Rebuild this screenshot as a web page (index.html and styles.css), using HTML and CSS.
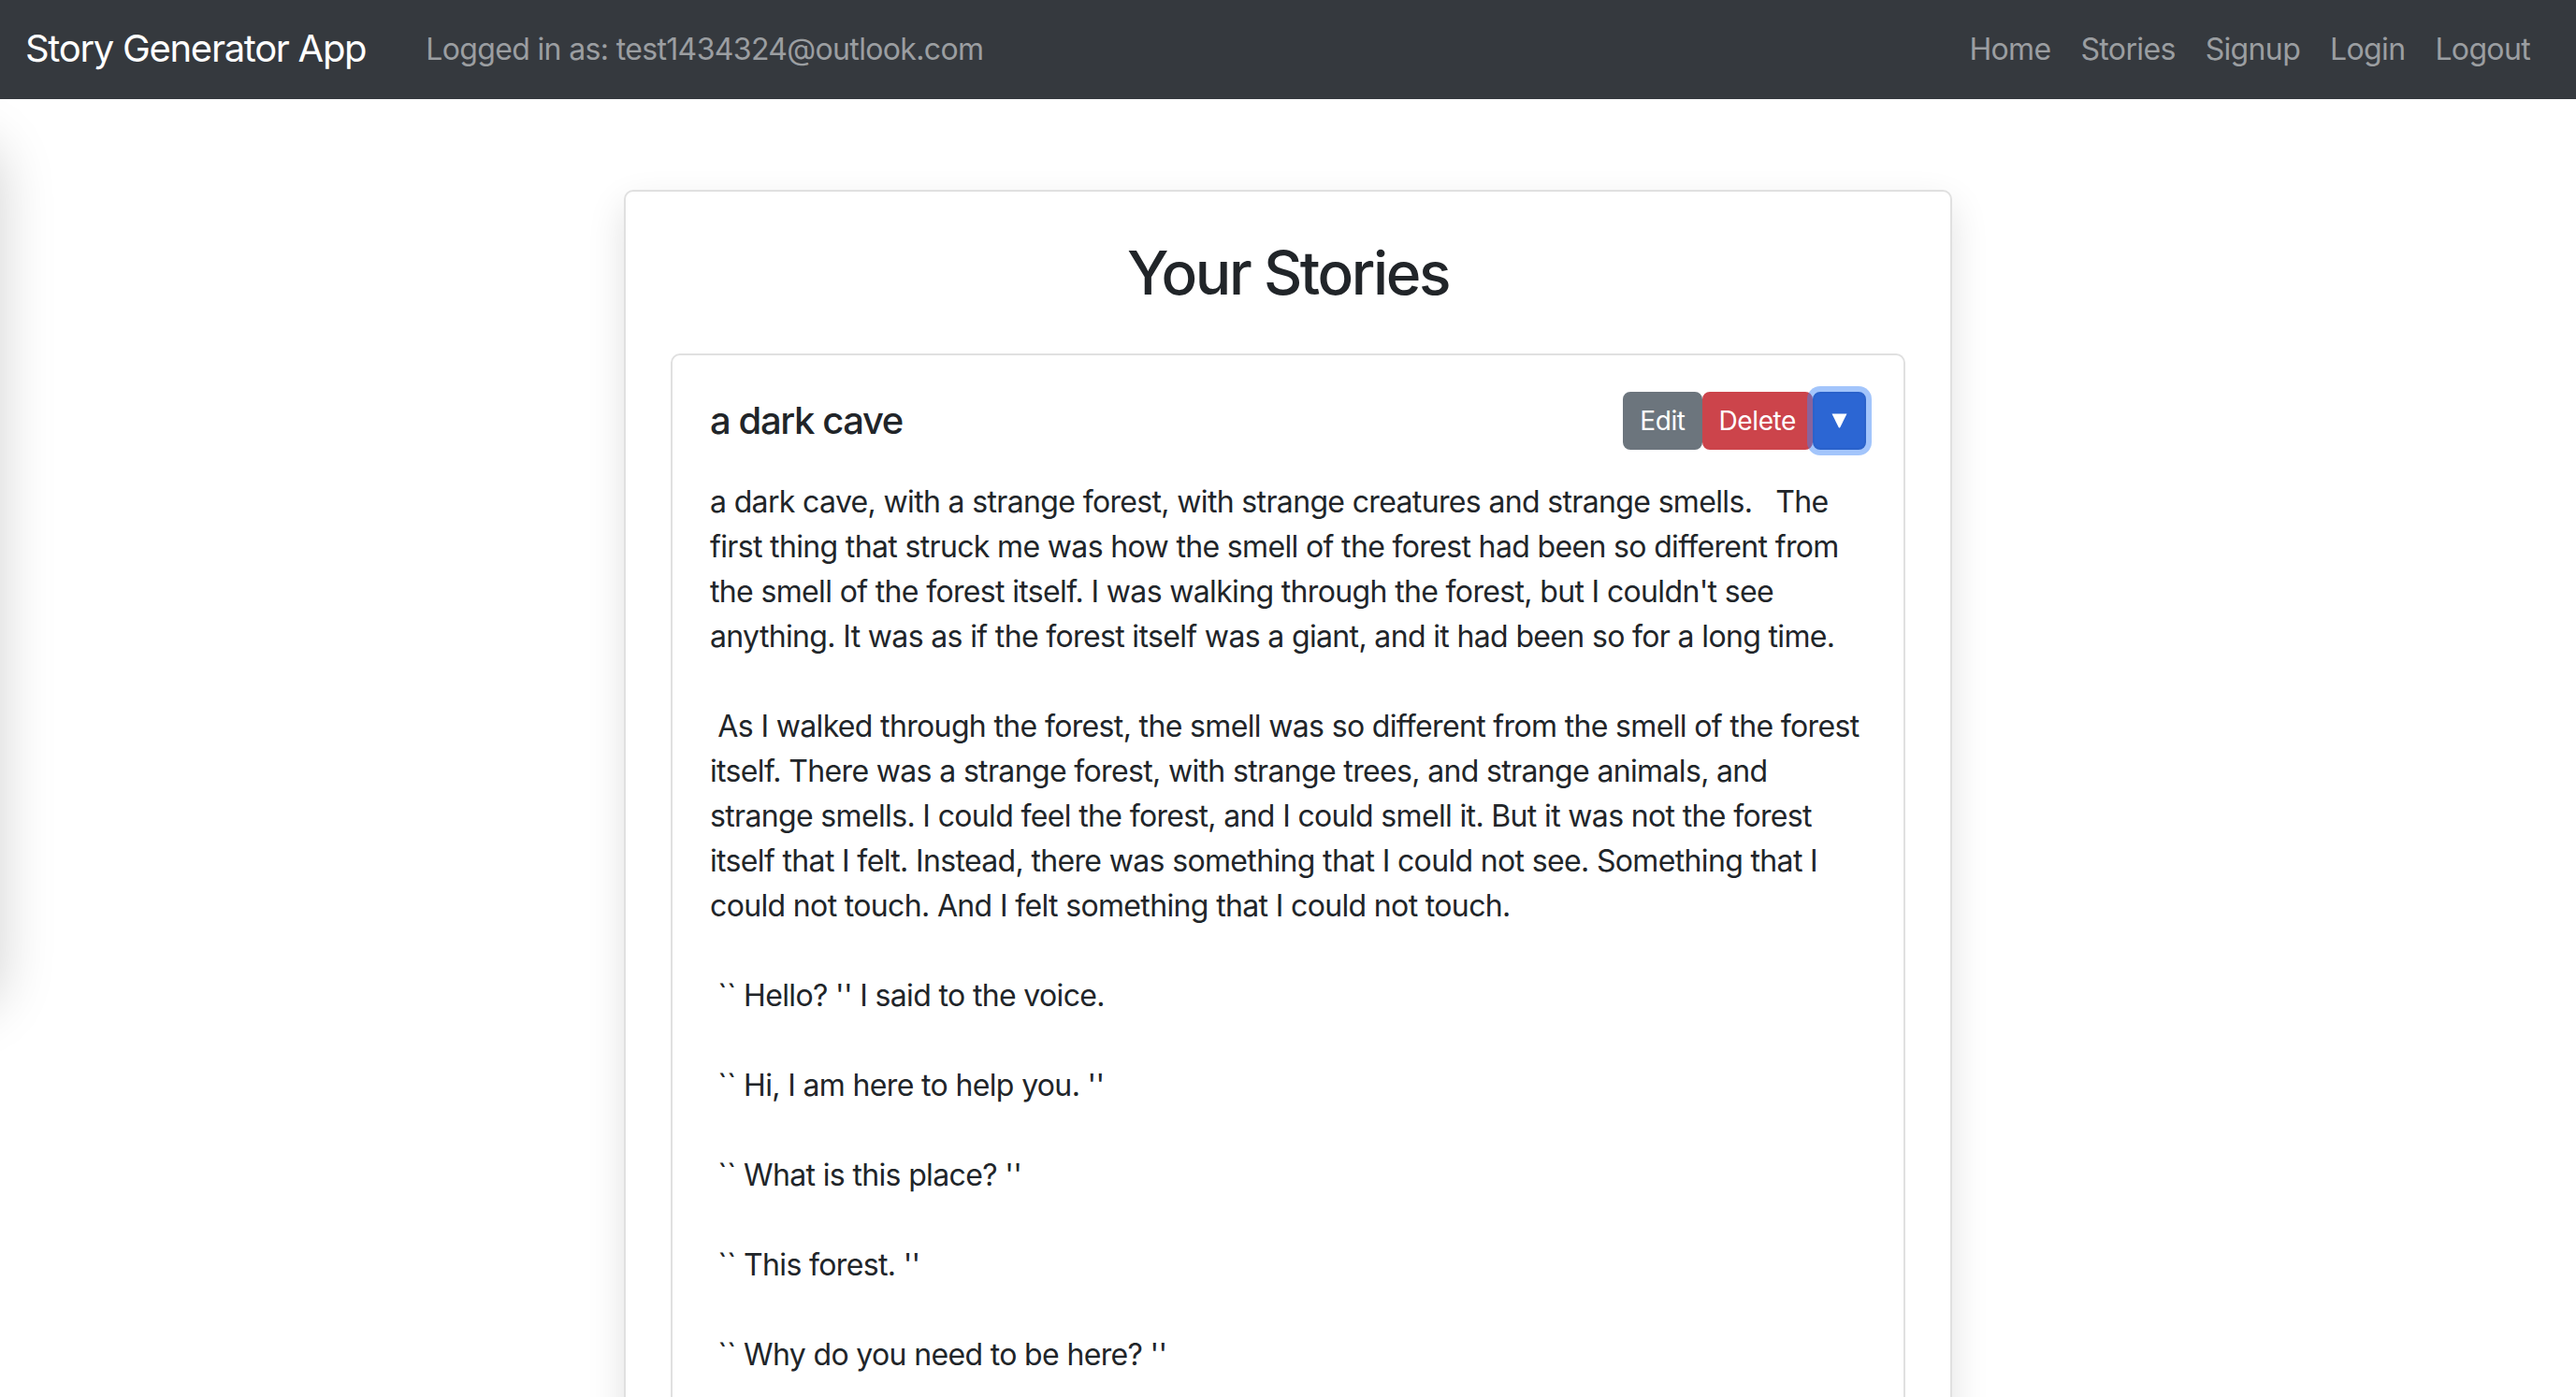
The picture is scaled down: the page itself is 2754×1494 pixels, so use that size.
FILE: index.html
```html
<!DOCTYPE html>
<html lang="en">
<head>
<meta charset="utf-8">
<title>Story Generator App</title>
<link rel="stylesheet" href="styles.css">
</head>
<body>
<nav class="navbar">
  <div class="nav-left">
    <a class="brand" href="#">Story Generator App</a>
    <span class="nav-text">Logged in as: test1434324@outlook.com</span>
  </div>
  <ul class="nav-links">
    <li><a href="#">Home</a></li>
    <li><a href="#">Stories</a></li>
    <li><a href="#">Signup</a></li>
    <li><a href="#">Login</a></li>
    <li><a href="#">Logout</a></li>
  </ul>
</nav>
<div class="edge-shadow"></div>
<main class="page">
  <section class="outer-card">
    <h2 class="page-title">Your Stories</h2>
    <article class="story-card">
      <div class="story-head">
        <h5 class="story-title">a dark cave</h5>
        <div class="btn-group">
          <button class="btn btn-edit">Edit</button>
          <button class="btn btn-delete">Delete</button>
          <button class="btn btn-toggle"><svg width="17" height="16" viewBox="0 0 17 16"><path d="M0.5 0.5 H16.5 L9.3 15 Q8.5 16 7.7 15 Z" fill="#fff"/></svg></button>
        </div>
      </div>
      <p class="story-text">a dark cave, with a strange forest, with strange creatures and strange smells.   The first thing that struck me was how the smell of the forest had been so different from the smell of the forest itself. I was walking through the forest, but I couldn't see anything. It was as if the forest itself was a giant, and it had been so for a long time.

 As I walked through the forest, the smell was so different from the smell of the forest itself. There was a strange forest, with strange trees, and strange animals, and strange smells. I could feel the forest, and I could smell it. But it was not the forest itself that I felt. Instead, there was something that I could not see. Something that I could not touch. And I felt something that I could not touch.

 `` Hello? '' I said to the voice.

 `` Hi, I am here to help you. ''

 `` What is this place? ''

 `` This forest. ''

 `` Why do you need to be here? ''</p>
    </article>
  </section>
</main>
</body>
</html>
```

FILE: styles.css
```css
* { box-sizing: border-box; }
html, body { margin: 0; padding: 0; }
body {
  font-family: Inter, "Liberation Sans", sans-serif;
  font-size: 32px;
  line-height: 48px;
  letter-spacing: -0.65px;
  color: #212529;
  background: #fff;
  overflow: hidden;
}
.navbar {
  height: 106px;
  background: #35393e;
  display: flex;
  align-items: center;
  justify-content: space-between;
  padding: 0 33px 0 27px;
}
.nav-left { display: flex; align-items: center; gap: 64px; }
.brand {
  color: #fff;
  text-decoration: none;
  font-size: 40px;
  line-height: 60px;
  letter-spacing: -1.3px;
  margin-top: -2px;
}
.nav-text { color: #9b9ea1; font-size: 32px; }
.nav-links { list-style: none; display: flex; margin: 0; padding: 0; }
.nav-links a {
  display: block;
  padding: 0 16px;
  color: #9b9ea1;
  text-decoration: none;
  font-size: 32px;
}
.edge-shadow {
  position: absolute;
  left: -300px;
  top: 150px;
  width: 300px;
  height: 930px;
  box-shadow: 0 0 60px rgba(0,0,0,0.18);
  border-radius: 40px;
}
.page {
  display: flex;
  justify-content: center;
  padding-top: 97px;
}
.outer-card {
  width: 1420px;
  border: 2px solid #e0e0e0;
  border-radius: 10px;
  padding: 48px 48px 48px;
  box-shadow: 0 16px 40px rgba(0,0,0,0.12);
  background: #fff;
}
.page-title {
  margin: 0 0 48px;
  text-align: center;
  font-size: 64px;
  line-height: 77px;
  font-weight: 500;
  letter-spacing: -2.4px;
}
.story-card {
  border: 2px solid #e0e0e0;
  border-radius: 10px;
  padding: 39px 40px 40px;
}
.story-head {
  display: flex;
  align-items: center;
  justify-content: space-between;
  margin-bottom: 32px;
}
.story-title {
  margin: 0;
  font-size: 40px;
  line-height: 48px;
  font-weight: 500;
  letter-spacing: -1.4px;
}
.btn-group { display: flex; }
.btn {
  font-family: inherit;
  font-size: 28px;
  line-height: 42px;
  letter-spacing: -0.4px;
  padding: 8px 16px;
  border: 2px solid transparent;
  color: #fff;
  border-radius: 8px;
  cursor: pointer;
}
.btn-edit { background: #6c757d; border-color: #6c757d; }
.btn-delete { background: #cc444b; border-color: #cc444b; }
.btn-toggle {
  background: #2c66d3;
  border-color: #2a62cb;
  padding: 0 18px;
  display: flex;
  align-items: center;
  justify-content: center;
  position: relative;
  box-shadow: 0 0 0 6px rgba(62,133,246,0.48);
}
.story-text {
  margin: 0;
  white-space: pre-wrap;
}
```
